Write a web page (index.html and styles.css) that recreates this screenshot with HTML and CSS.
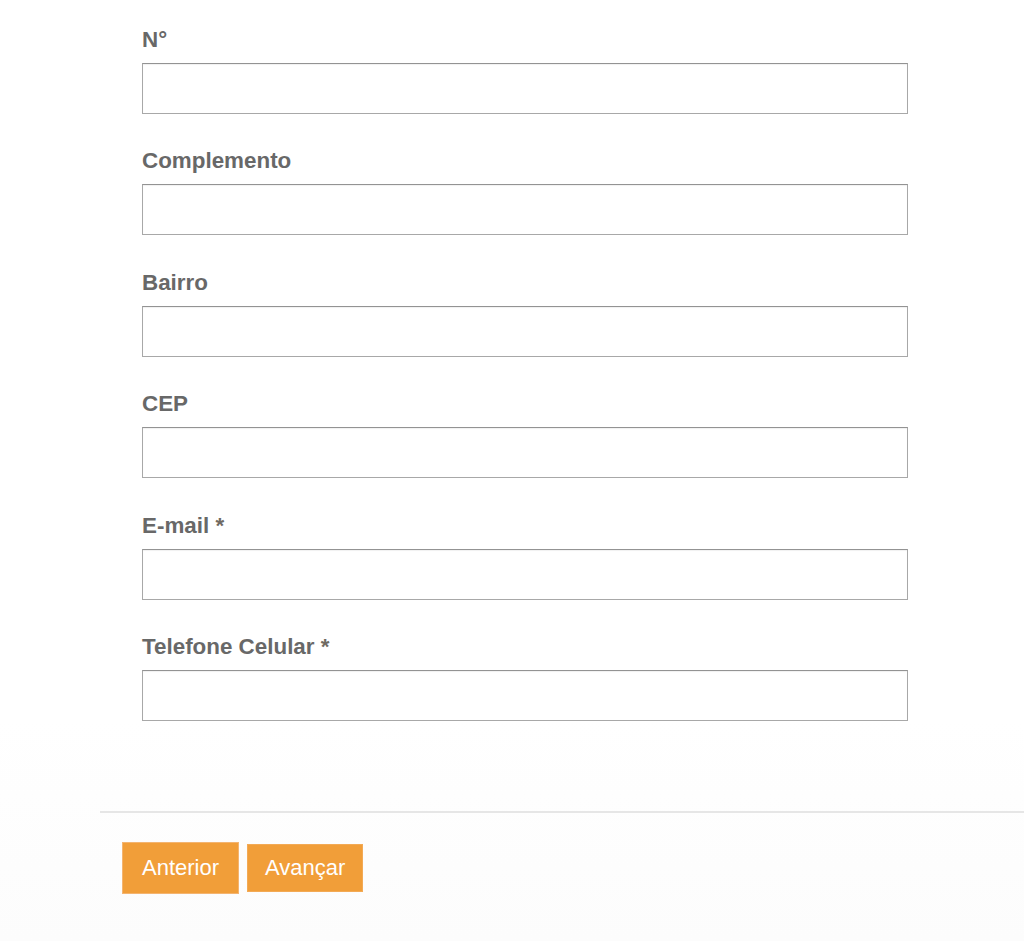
FILE: index.html
```html
<!DOCTYPE html>
<html lang="pt-BR">
<head>
  <meta charset="UTF-8" />
  <title>Cadastro</title>
  <link rel="stylesheet" href="styles.css">
</head>
<body>
  <form id="cadastro">
    <div class="fields">
      <div class="field">
        <label for="numero">N°</label>
        <input type="text" id="numero" />
      </div>
      <div class="field">
        <label for="complemento">Complemento</label>
        <input type="text" id="complemento" />
      </div>
      <div class="field">
        <label for="bairro">Bairro</label>
        <input type="text" id="bairro" />
      </div>
      <div class="field">
        <label for="cep">CEP</label>
        <input type="text" id="cep" />
      </div>
      <div class="field">
        <label for="email">E-mail <span class="req">*</span></label>
        <input type="email" id="email" />
      </div>
      <div class="field">
        <label for="celular">Telefone Celular <span class="req">*</span></label>
        <input type="tel" id="celular" />
      </div>
    </div>

    <div class="actions">
      <button type="button" class="btn btn-focus">Anterior</button>
      <button type="button" class="btn">Avançar</button>
    </div>
  </form>
</body>
</html>
```

FILE: styles.css
```css
body {
  margin: 0;
  background: linear-gradient(#ffffff 0, #ffffff 720px, #fcfcfc 941px);
  font-family: "Liberation Sans", Arial, sans-serif;
  color: #666;
  min-height: 941px;
}

.fields {
  padding: 26px 117px 0 142px;
}

.field {
  margin-bottom: 33.4px;
}

.field:last-child {
  margin-bottom: 0;
}

label {
  display: block;
  font-size: 22.4px;
  font-weight: bold;
  line-height: 26px;
  padding-top: 1px;
  margin-bottom: 10px;
  color: #686868;
}

.req {
  color: #6f6a62;
}

input {
  display: block;
  box-sizing: border-box;
  width: 766px;
  height: 51px;
  margin: 0;
  border: 1px solid #a8a8a8;
  border-top-color: #939393;
  box-shadow: inset 0 1px 1px rgba(0, 0, 0, 0.06);
  background: #fff;
  font-size: 18px;
  padding: 0 10px;
}

.actions {
  margin: 90px 0 0 100px;
  border-top: 2px solid #e6e6e6;
  padding: 29px 0 0 22px;
  display: flex;
  align-items: center;
  gap: 8px;
}

.btn {
  font-family: "Liberation Sans", Arial, sans-serif;
  font-size: 22px;
  color: #fff;
  background-color: #f19e39;
  border: 1px solid #f3aa55;
  border-radius: 0;
  height: 48px;
  padding: 0 17px;
  cursor: pointer;
}

.btn-focus {
  height: 52px;
  padding: 0 19px;
  border-color: #f4b470;
}
```
